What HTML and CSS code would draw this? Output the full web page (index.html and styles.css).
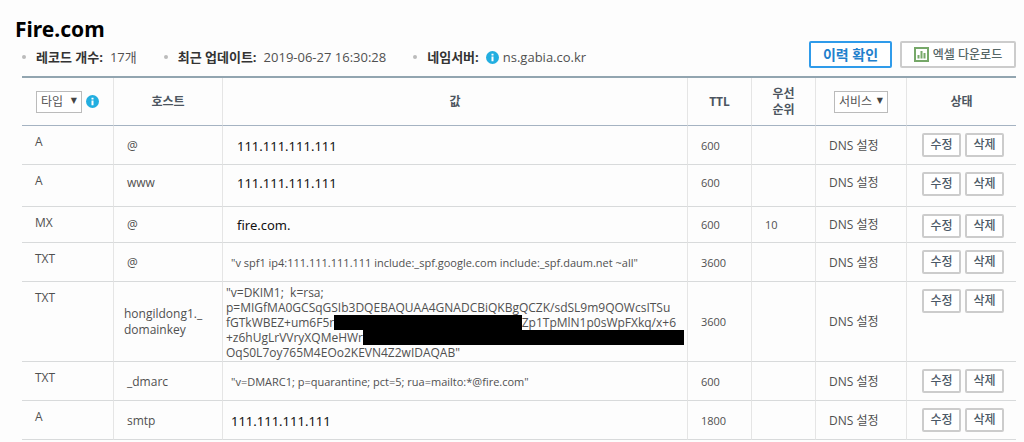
FILE: index.html
```html
<!DOCTYPE html>
<html lang="ko">
<head>
<meta charset="utf-8">
<title>Fire.com DNS</title>
<link rel="stylesheet" href="styles.css">
</head>
<body>
<header class="top">
  <h1 class="domain">Fire.com</h1>
  <div class="bar">
    <ul class="meta">
      <li class="meta-item"><b>레코드 개수:</b> <span>17개</span></li>
      <li class="meta-item"><b>최근 업데이트:</b> <span>2019-06-27 16:30:28</span></li>
      <li class="meta-item"><b>네임서버:</b>
        <span class="server"><svg class="info" viewBox="0 0 13 13" aria-hidden="true"><circle cx="6.500" cy="6.500" r="6.500" fill="#22aee0"/><path d="M5.500 5.500h2v4.700h-2zM5.500 2.700h2v1.800h-2z" fill="#fff"/></svg>
        ns.gabia.co.kr</span></li>
    </ul>
    <div class="actions">
      <button class="btn-history" type="button">이력 확인</button>
      <button class="btn-excel" type="button">
        <svg class="chart" viewBox="0 0 15 15" aria-hidden="true"><rect x="1" y="1" width="13" height="13" fill="#fff" stroke="#76a869" stroke-width="2"/><path d="M3.500 8h2v3.500h-2zM6.500 4h2v7.500h-2zM9.500 6h2v5.500h-2z" fill="#76a869"/></svg>
        엑셀 다운로드</button>
    </div>
  </div>
</header>
<table class="records">
  <colgroup><col class="c-type"><col class="c-host"><col><col class="c-num"><col class="c-num"><col class="c-service"><col class="c-state"></colgroup>
  <thead>
    <tr>
      <th><div class="filter"><span class="pick"><select class="select type-select" aria-label="타입"><option>타입</option></select></span>
        <svg class="info" viewBox="0 0 13 13" aria-hidden="true"><circle cx="6.500" cy="6.500" r="6.500" fill="#22aee0"/><path d="M5.500 5.500h2v4.700h-2zM5.500 2.700h2v1.800h-2z" fill="#fff"/></svg></div></th>
      <th>호스트</th>
      <th>값</th>
      <th>TTL</th>
      <th>우선<br>순위</th>
      <th><span class="pick"><select class="select service-select" aria-label="서비스"><option>서비스</option></select></span></th>
      <th>상태</th>
    </tr>
  </thead>
  <tbody>
    <tr>
      <td class="type">A</td><td>@</td><td class="value ip">111.111.111.111</td><td class="num">600</td><td></td><td>DNS 설정</td>
      <td class="state"><div class="pair"><button class="btn" type="button">수정</button><button class="btn" type="button">삭제</button></div></td>
    </tr>
    <tr class="roomy">
      <td class="type">A</td><td>www</td><td class="value ip">111.111.111.111</td><td class="num">600</td><td></td><td>DNS 설정</td>
      <td class="state"><div class="pair"><button class="btn" type="button">수정</button><button class="btn" type="button">삭제</button></div></td>
    </tr>
    <tr class="compact">
      <td class="type">MX</td><td>@</td><td class="value ip">fire.com.</td><td class="num">600</td><td class="num">10</td><td>DNS 설정</td>
      <td class="state"><div class="pair"><button class="btn" type="button">수정</button><button class="btn" type="button">삭제</button></div></td>
    </tr>
    <tr>
      <td class="type">TXT</td><td>@</td><td class="value">"v spf1 ip4:111.111.111.111 include:_spf.google.com include:_spf.daum.net ~all"</td><td class="num">3600</td><td></td><td>DNS 설정</td>
      <td class="state"><div class="pair"><button class="btn" type="button">수정</button><button class="btn" type="button">삭제</button></div></td>
    </tr>
    <tr class="tall">
      <td class="type">TXT</td><td class="long-host">hongildong1._<br>domainkey</td>
      <td class="key">
        <div class="line">"v=DKIM1;&nbsp; k=rsa;</div>
        <div class="line">p=MIGfMA0GCSqGSIb3DQEBAQUAA4GNADCBiQKBgQCZK/sdSL9m9QOWcsITSu</div>
        <div class="line inset">fGTkWBEZ+um6F5r<span class="redacted"></span>Zp1TpMlN1p0sWpFXkq/x+6</div>
        <div class="line">+z6hUgLrVVryXQMeHWr<span class="redacted"></span></div>
        <div class="line">OqS0L7oy765M4EOo2KEVN4Z2wIDAQAB"</div>
      </td>
      <td class="num">3600</td><td></td><td>DNS 설정</td>
      <td class="state"><div class="pair"><button class="btn" type="button">수정</button><button class="btn" type="button">삭제</button></div></td>
    </tr>
    <tr>
      <td class="type">TXT</td><td>_dmarc</td><td class="value">"v=DMARC1; p=quarantine; pct=5; rua=mailto:*@fire.com"</td><td class="num">600</td><td></td><td>DNS 설정</td>
      <td class="state"><div class="pair"><button class="btn" type="button">수정</button><button class="btn" type="button">삭제</button></div></td>
    </tr>
    <tr>
      <td class="type">A</td><td>smtp</td><td class="value ip last-ip">111.111.111.111</td><td class="num">1800</td><td></td><td>DNS 설정</td>
      <td class="state"><div class="pair"><button class="btn" type="button">수정</button><button class="btn" type="button">삭제</button></div></td>
    </tr>
  </tbody>
</table>
</body>
</html>
```
FILE: styles.css
```css
* { box-sizing: border-box; }
body {
  margin: 0;
  padding: 17px 8px 0 22px;
  background: #fdfdfd;
  color: #505050;
  font: 12px/16px "Open Sans", "Noto Sans CJK KR", sans-serif;
  overflow-x: hidden;
}
button, select { font: inherit; }
.top { padding-bottom: 8px; }
.domain {
  margin: 0 0 0 -7px;
  color: #000;
  font: bold 21px/24px "Noto Sans", sans-serif;
}
.bar { display: flex; justify-content: space-between; align-items: flex-start; }
.meta {
  display: flex;
  gap: 27px;
  margin: 0;
  padding: 8px 0 0;
  list-style: none;
  font-size: 13px;
}
.meta-item { display: flex; align-items: center; gap: 7px; white-space: nowrap; }
.meta-item::before {
  content: "";
  width: 4px;
  height: 4px;
  margin-right: 3px;
  border-radius: 50%;
  background: #bbb;
}
.meta b { color: #333; }
.server { display: flex; align-items: center; gap: 4px; }
.info { width: 13px; height: 13px; flex: none; }
.actions { display: flex; gap: 8px; }
.btn-history, .btn-excel, .btn {
  display: flex;
  align-items: center;
  justify-content: center;
  padding: 0;
  border: 2px solid #ccc;
  border-radius: 2px;
  background: #fff;
  white-space: nowrap;
}
.btn-history {
  width: 83px;
  height: 27px;
  border-color: #2f9bea;
  color: #1f80cc;
  font-size: 14px;
  font-weight: bold;
}
.btn-excel { width: 116px; height: 27px; gap: 4px; color: #566; font-weight: 500; }
.chart { width: 15px; height: 15px; }

.records {
  width: 100%;
  border-collapse: separate;
  border-spacing: 0;
  border-top: 2px solid #92a5b0;
  table-layout: fixed;
}
.c-type { width: 92px; }
.c-service { width: 91px; }
.c-host { width: 109px; }
.c-num { width: 64px; }
.c-state { width: 109px; }
.records th, .records td { border-right: 1px solid #e5e5e5; }
.records th:last-child, .records td:last-child { border-right: 0; }
.records th {
  height: 48px;
  padding: 0;
  border-bottom: 1px solid #a5b3c2;
  color: #4c5560;
  text-align: center;
}
.records td {
  height: 39px;
  padding: 12px 0 0 13px;
  border-bottom: 1px solid #d8dadb;
  vertical-align: top;
}
.records .roomy td { height: 42px; padding-top: 10px; }
.records .compact td { height: 36px; padding-top: 10px; }
.records .tall td { padding: 0 0 0 13px; height: 80px; vertical-align: middle; }
.records tr .type.type { padding-top: 8px; vertical-align: top; }
.records tr .state.state { padding: 7px 0 0 15px; vertical-align: top; }
.records .num { font-size: 11px; }
.records .value { padding-left: 8px; font-size: 11px; }
.records .ip { padding-left: 14px; color: #111; font-family: "Noto Sans", sans-serif; font-size: 13px; }
.records .last-ip { padding-left: 8px; }
.records .tall .long-host { padding-left: 10px; }
.records .tall .key { padding: 3px 3px 1px; line-height: 15px; }
.line { display: flex; white-space: nowrap; }
.inset { padding-right: 8px; }
.redacted { flex: 1; background: #000; }
.filter { display: flex; align-items: center; gap: 4px; padding-left: 14px; }
.pick { position: relative; display: inline-block; font-weight: normal; }
.pick::after {
  content: "▼";
  position: absolute;
  top: 0;
  right: 5px;
  color: #444;
  font: 8px/20px "DejaVu Sans", sans-serif;
  pointer-events: none;
}
.select {
  display: block;
  height: 22px;
  padding: 0 4px;
  border: 1px solid #bbb;
  border-radius: 0;
  background: #fff;
  color: #555;
  appearance: none;
}
.type-select { width: 46px; }
.service-select { width: 54px; }
.pair { display: flex; gap: 4px; }
.btn { width: 39px; height: 24px; color: #4a5866; font-weight: 500; }
```
